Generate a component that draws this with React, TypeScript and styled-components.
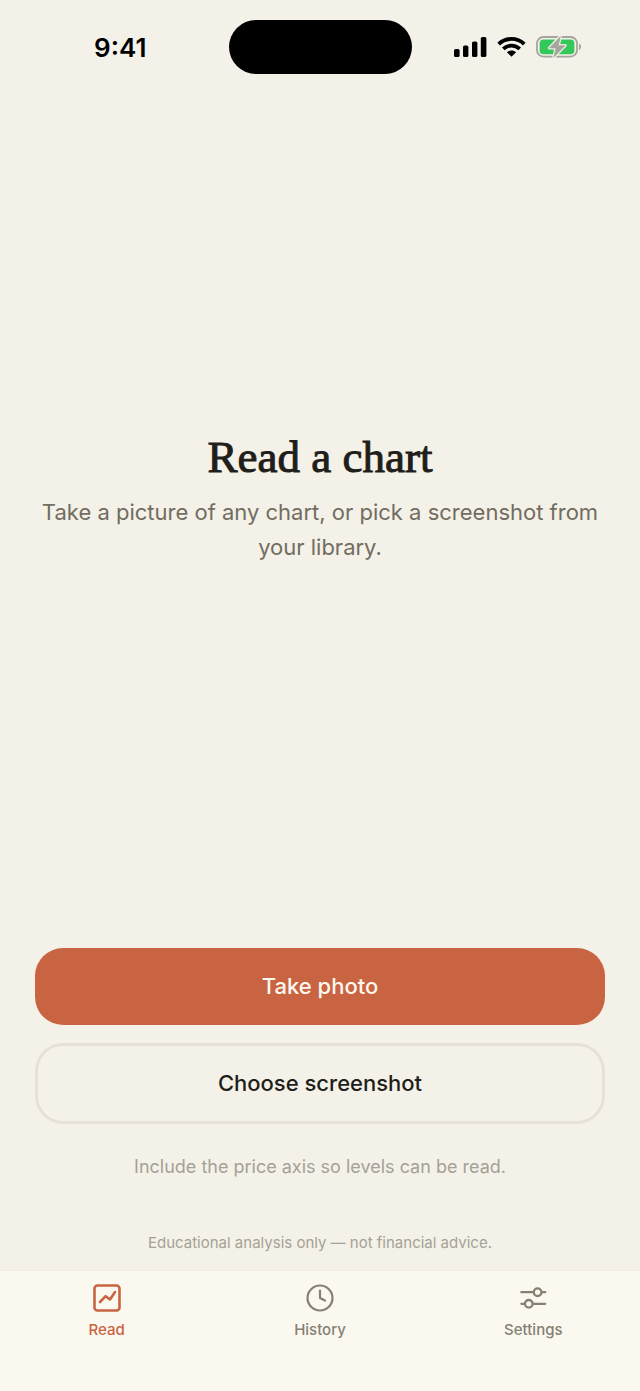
import React, { useState } from "react";
import styled, { createGlobalStyle } from "styled-components";

const color = {
  paper: "#f4f1e8",
  bar: "#fbf8f0",
  line: "#e5e1d4",
  ink: "#1f1e1a",
  body: "#716d60",
  faint: "#a5a196",
  tab: "#858072",
  accent: "#c96442",
};

const GlobalStyle = createGlobalStyle`
  *, *::before, *::after { box-sizing: border-box; }
  body {
    margin: 0;
    background: ${color.paper};
    font-family: Inter, "Liberation Sans", sans-serif;
  }
`;

const Screen = styled.div`
  display: flex;
  flex-direction: column;
  min-height: 100vh;
  background: ${color.paper};
`;

const StatusBar = styled.header`
  display: grid;
  grid-template-columns: 1fr 183px 1fr;
  align-items: center;
  padding: 20px 0;
`;

const Clock = styled.time`
  padding: 2px 0 0 12px;
  text-align: center;
  font-size: 26px;
  line-height: 32px;
  font-weight: 600;
  color: #000;
`;

const Island = styled.div`
  height: 54px;
  border-radius: 27px;
  background: #000;
`;

const StatusIcons = styled.div`
  display: flex;
  justify-content: center;
  align-items: center;
  gap: 10px;
  padding-right: 16px;

  svg {
    display: block;
  }
`;

const Main = styled.main`
  flex: 1;
  display: flex;
  flex-direction: column;
  padding: 0 35px;
`;

const Hero = styled.section`
  flex: 1;
  display: flex;
  flex-direction: column;
  justify-content: center;
  gap: 14px;
  text-align: center;
`;

const Title = styled.h1`
  margin: 0;
  font-family: "Liberation Serif", serif;
  font-size: 45px;
  line-height: 48px;
  font-weight: 400;
  color: ${color.ink};
  -webkit-text-stroke: 1px ${color.ink};
`;

const Lead = styled.p`
  margin: 0;
  font-size: 22px;
  line-height: 35px;
  color: ${color.body};
`;

const Actions = styled.section`
  display: flex;
  flex-direction: column;
  gap: 18px;
  padding-top: 44px;
`;

const ActionButton = styled.button<{ $primary?: boolean }>`
  width: 100%;
  padding: ${(p) => (p.$primary ? "22px" : "21px")} 24px;
  border: ${(p) => (p.$primary ? "0" : `3px solid ${color.line}`)};
  border-radius: 28px;
  background: ${(p) => (p.$primary ? color.accent : "transparent")};
  color: ${(p) => (p.$primary ? color.bar : color.ink)};
  font-family: inherit;
  font-size: 22px;
  line-height: 33px;
  font-weight: 500;
  cursor: pointer;
`;

const Hint = styled.p`
  margin: 0;
  padding: 12px 0;
  text-align: center;
  font-size: 18px;
  line-height: 26px;
  color: ${color.faint};
`;

const Disclaimer = styled.p`
  margin: 0;
  padding: 40px 0 16px;
  text-align: center;
  font-size: 15px;
  line-height: 22px;
  color: ${color.faint};
`;

const TabBar = styled.nav`
  display: grid;
  grid-template-columns: repeat(3, 1fr);
  padding: 12px 0 50px;
  border-top: 1px solid #f1ede3;
  background: ${color.bar};
`;

const Tab = styled.button<{ $active: boolean }>`
  display: flex;
  flex-direction: column;
  align-items: center;
  gap: 6px;
  padding: 0;
  border: 0;
  background: none;
  color: ${(p) => (p.$active ? color.accent : color.tab)};
  font-family: inherit;
  font-size: 15px;
  line-height: 22px;
  font-weight: 500;
  cursor: pointer;
`;

const TabIcon = styled.svg`
  display: block;
  width: 30px;
  height: 30px;
  fill: none;
  stroke: currentColor;
  stroke-width: 2.6;
  stroke-linecap: round;
  stroke-linejoin: round;
`;

const Signal = () => (
  <svg width="33" height="22" viewBox="0 0 33 22" aria-hidden="true">
    <rect x="0" y="13" width="5.6" height="8" rx="1.6" />
    <rect x="9" y="9.6" width="5.4" height="11.4" rx="1.6" />
    <rect x="18" y="5.4" width="5.4" height="15.6" rx="1.6" />
    <rect x="26.8" y="1" width="5.6" height="20" rx="1.6" />
  </svg>
);

const Wifi = () => (
  <svg width="29" height="22" viewBox="0 0 29 22" aria-hidden="true">
    <g fill="none" stroke="#000" strokeWidth="3.8">
      <path d="M1.7 8.1C8.7 1.2 20.3 1.2 27.3 8.1" />
      <path d="M6.3 12.9C10.9 8.5 18.1 8.5 22.7 12.9" />
    </g>
    <path d="M14.5 20.8 9.9 16.2C12.4 13.9 16.6 13.9 19.1 16.2Z" />
  </svg>
);

const bolt = "M24.4 1.4 13.4 13H20L17.8 22.2 29.2 10.4H22.4Z";

const Battery = () => (
  <svg width="46" height="24" viewBox="0 0 46 24" aria-hidden="true">
    <rect x="1" y="2" width="40" height="19.6" rx="6.4" fill="none" stroke="#a5a49d" strokeWidth="1.8" />
    <path d="M43 8.6C45.8 9.6 45.8 14 43 15Z" fill="#a5a49d" />
    <rect x="3.6" y="4.4" width="34.8" height="14.8" rx="4" fill="#34c759" />
    <path d={bolt} fill={color.paper} stroke={color.paper} strokeWidth="3" strokeLinejoin="round" />
    <path d={bolt} fill="#a5a49d" stroke="#a5a49d" strokeWidth="0.6" strokeLinejoin="round" />
  </svg>
);

const tabs = [
  {
    name: "Read",
    icon: (
      <>
        <rect x="2.5" y="2.5" width="25" height="25" rx="3" />
        <path d="m8 19 5.6-5.8 4.4 3.2 5-7.4" />
      </>
    ),
  },
  {
    name: "History",
    icon: (
      <>
        <circle cx="15" cy="15" r="12.5" strokeWidth="2.2" />
        <path d="M15 7.5V15l5 2.6" strokeWidth="2.2" />
      </>
    ),
  },
  {
    name: "Settings",
    icon: (
      <g strokeWidth="2.3">
        <path d="M3.4 9.2h12.4M24 9.2h3.2M3.4 20.8h3.2M14.8 20.8h12.4" />
        <circle cx="19.6" cy="9.2" r="3.8" />
        <circle cx="10.8" cy="20.8" r="3.8" />
      </g>
    ),
  },
];

export default function App() {
  const [active, setActive] = useState("Read");

  return (
    <Screen>
      <GlobalStyle />
      <StatusBar>
        <Clock>9:41</Clock>
        <Island />
        <StatusIcons>
          <Signal />
          <Wifi />
          <Battery />
        </StatusIcons>
      </StatusBar>
      <Main>
        <Hero>
          <Title>Read a chart</Title>
          <Lead>Take a picture of any chart, or pick a screenshot from your library.</Lead>
        </Hero>
        <Actions>
          <ActionButton type="button" $primary>
            Take photo
          </ActionButton>
          <ActionButton type="button">Choose screenshot</ActionButton>
          <Hint>Include the price axis so levels can be read.</Hint>
        </Actions>
        <Disclaimer>Educational analysis only — not financial advice.</Disclaimer>
      </Main>
      <TabBar aria-label="Main">
        {tabs.map((tab) => (
          <Tab
            key={tab.name}
            type="button"
            $active={tab.name === active}
            aria-current={tab.name === active ? "page" : undefined}
            onClick={() => setActive(tab.name)}
          >
            <TabIcon viewBox="0 0 30 30" aria-hidden="true">
              {tab.icon}
            </TabIcon>
            {tab.name}
          </Tab>
        ))}
      </TabBar>
    </Screen>
  );
}
